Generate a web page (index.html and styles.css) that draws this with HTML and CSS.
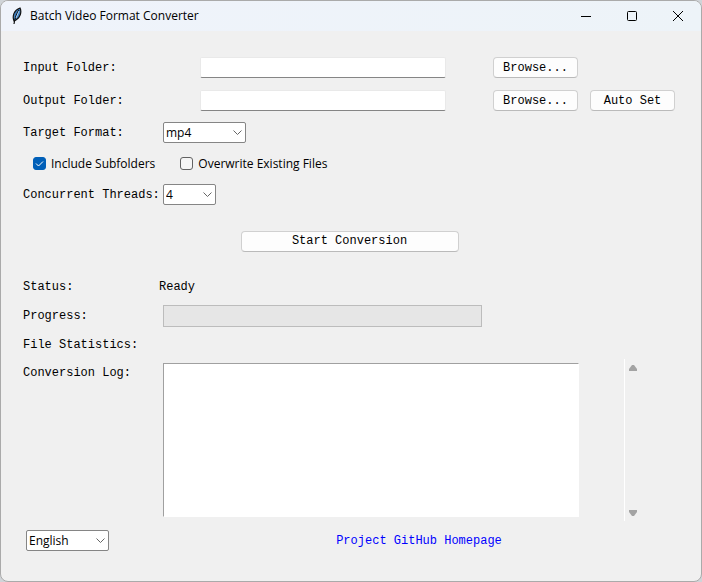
FILE: index.html
```html
<!DOCTYPE html>
<html lang="en">
<head>
<meta charset="utf-8">
<title>Batch Video Format Converter</title>
<link rel="stylesheet" href="styles.css">
</head>
<body>
<div class="window">
  <header class="titlebar">
    <svg class="feather" width="10" height="18" viewBox="0 0 10 18" aria-hidden="true">
      <path d="M2 14C0 9 2 3 8 1C10 5 8 11 4 13Z" fill="#3f7fc0" stroke="#111" stroke-width="1.2"/>
      <path d="M7 3C4 7 3 11 2 17" fill="none" stroke="#111" stroke-width="1.2"/>
      <path d="M7 4L4 11" stroke="#a9d0f5" stroke-width="1"/>
    </svg>
    <h1 class="title">Batch Video Format Converter</h1>
    <button class="caption" type="button" aria-label="Minimize"><svg width="12" height="12" viewBox="0 0 12 12"><path d="M1 6.5H11"/></svg></button>
    <button class="caption" type="button" aria-label="Maximize"><svg width="12" height="12" viewBox="0 0 12 12"><rect x="1.5" y="1.5" width="9" height="9" rx="1"/></svg></button>
    <button class="caption" type="button" aria-label="Close"><svg width="12" height="12" viewBox="0 0 12 12"><path d="M1 1L11 11M11 1L1 11"/></svg></button>
  </header>
  <main class="form">
    <label class="label" for="input-folder">Input Folder:</label>
    <input class="entry" id="input-folder" type="text">
    <button class="button browse" type="button">Browse...</button>

    <label class="label" for="output-folder">Output Folder:</label>
    <input class="entry" id="output-folder" type="text">
    <button class="button browse" type="button">Browse...</button>
    <button class="button auto" type="button">Auto Set</button>

    <label class="label" for="format">Target Format:</label>
    <div class="combo">
      <select id="format"><option>mp4</option></select>
      <svg class="chevron" width="9" height="6" viewBox="0 0 9 6" aria-hidden="true"><path d="M.5 .5L4.5 4.5L8.5 .5"/></svg>
    </div>

    <div class="options">
      <label class="option"><span class="box"><input type="checkbox" checked><svg class="tick" width="13" height="13" viewBox="0 0 13 13" aria-hidden="true"><path d="M3 6.5L5.5 9L10 4.5"/></svg></span>Include Subfolders</label>
      <label class="option"><span class="box"><input type="checkbox"></span>Overwrite Existing Files</label>
    </div>

    <label class="label" for="threads">Concurrent Threads:</label>
    <div class="combo combo-small">
      <select id="threads"><option>4</option></select>
      <svg class="chevron" width="9" height="6" viewBox="0 0 9 6" aria-hidden="true"><path d="M.5 .5L4.5 4.5L8.5 .5"/></svg>
    </div>

    <button class="button start" type="button">Start Conversion</button>

    <span class="label">Status:</span>
    <span class="status">Ready</span>

    <span class="label">Progress:</span>
    <div class="progress" role="progressbar" aria-label="Progress" aria-valuenow="0"></div>

    <span class="label">File Statistics:</span>

    <label class="label log-label" for="log">Conversion Log:</label>
    <textarea class="log" id="log"></textarea>
    <div class="scrollbar">
      <button type="button" aria-label="Scroll up"><svg width="8" height="6" viewBox="0 0 8 6"><path d="M3 0H5L8 4V6H0V4Z"/></svg></button>
      <button type="button" aria-label="Scroll down"><svg width="8" height="6" viewBox="0 0 8 6"><path d="M0 0H8V2L5 6H3L0 2Z"/></svg></button>
    </div>

    <div class="combo language">
      <select aria-label="Language"><option>English</option></select>
      <svg class="chevron" width="9" height="6" viewBox="0 0 9 6" aria-hidden="true"><path d="M.5 .5L4.5 4.5L8.5 .5"/></svg>
    </div>
    <a class="homepage" href="#">Project GitHub Homepage</a>
  </main>
</div>
</body>
</html>
```
FILE: styles.css
```css
* {
  box-sizing: border-box;
}

body {
  margin: 0;
  background: #d0d4d8;
  color: #000;
  font: 12px/16px "Liberation Mono", monospace;
}

button,
input,
select,
textarea {
  margin: 0;
  font: inherit;
  color: inherit;
}

.window {
  display: flex;
  flex-direction: column;
  min-height: 100vh;
  overflow: hidden;
  border: 1px solid #aaa;
  border-radius: 8px;
  background: #f0f0f0;
}

.titlebar {
  display: flex;
  align-items: center;
  height: 30px;
  padding-left: 11px;
  background: linear-gradient(90deg, #eff3fb, #edf3f8);
}

.title {
  flex: 1;
  margin: 0 0 0 8px;
  font: 12px/16px "Open Sans", sans-serif;
}

.caption {
  display: grid;
  place-items: center;
  width: 46px;
  height: 30px;
  padding: 0;
  border: 0;
  background: none;
}

.caption svg {
  fill: none;
  stroke: #000;
  stroke-width: 1;
}

.form {
  display: grid;
  grid-template-columns: 140px 1fr 107px 87px;
  grid-template-rows: 33px 33px 31px 31px 31px 62px 29px 29px 30px 160px 41px;
  align-items: center;
  padding: 20px 25px 0 22px;
}

.label {
  grid-column: 1;
  white-space: nowrap;
}

.entry {
  justify-self: center;
  width: 246px;
  height: 21px;
  padding: 0 4px;
  border: 1px solid #e9e9e9;
  border-bottom-color: #858585;
  border-radius: 2px;
  background: #fff;
}

.button {
  height: 21px;
  padding: 0;
  border: 1px solid #d0d0d0;
  border-bottom-color: #bababa;
  border-radius: 4px;
  background: #fdfdfd;
}

.browse,
.auto {
  justify-self: center;
  width: 85px;
}

.start {
  grid-column: 1 / -1;
  justify-self: center;
  width: 218px;
}

.combo {
  position: relative;
  grid-column: 2;
  width: 83px;
  height: 21px;
}

.combo-small {
  width: 53px;
}

.combo select {
  appearance: none;
  width: 100%;
  height: 100%;
  padding: 0 16px 0 2px;
  border: 1px solid #858585;
  border-radius: 2px;
  background: #fff;
  font: 12px/16px "Open Sans", sans-serif;
}

.chevron {
  position: absolute;
  top: 8px;
  right: 4px;
  fill: none;
  stroke: #666;
  pointer-events: none;
}

.options {
  display: flex;
  grid-column: 1 / -1;
  gap: 25px;
  padding-left: 10px;
  font-family: "Open Sans", sans-serif;
}

.option {
  display: flex;
  align-items: center;
  gap: 5px;
}

.box {
  position: relative;
  width: 13px;
  height: 13px;
}

.box input {
  display: block;
  appearance: none;
  width: 13px;
  height: 13px;
  border: 1px solid #626262;
  border-radius: 3px;
  background: #f5f5f5;
}

.box input:checked {
  border-color: #005fb8;
  background: #005fb8;
}

.tick {
  position: absolute;
  inset: 0;
  fill: none;
  stroke: #fff;
  pointer-events: none;
}

.status {
  grid-column: 2 / -1;
  margin-left: -4px;
}

.progress {
  height: 22px;
  border: 1px solid #bcbcbc;
  background: #e6e6e6;
}

.log-label {
  align-self: start;
  padding-top: 5px;
}

.log {
  grid-column: 2 / 4;
  height: 154px;
  margin-right: 10px;
  padding: 2px;
  border: 1px solid #fff;
  border-top-color: #a0a0a0;
  border-left-color: #a0a0a0;
  background: #fff;
  resize: none;
}

.scrollbar {
  display: flex;
  flex-direction: column;
  justify-content: space-between;
  justify-self: center;
  width: 17px;
  height: 162px;
  border-left: 1px solid #fff;
}

.scrollbar button {
  display: grid;
  place-items: center;
  height: 17px;
  padding: 0;
  border: 0;
  background: none;
}

.scrollbar svg {
  fill: #a3a3a3;
}

.language {
  grid-column: 1;
  margin-left: 3px;
}

.homepage {
  grid-column: 2 / 4;
  justify-self: center;
  margin-left: 86px;
  color: #00f;
  text-decoration: none;
}
```
